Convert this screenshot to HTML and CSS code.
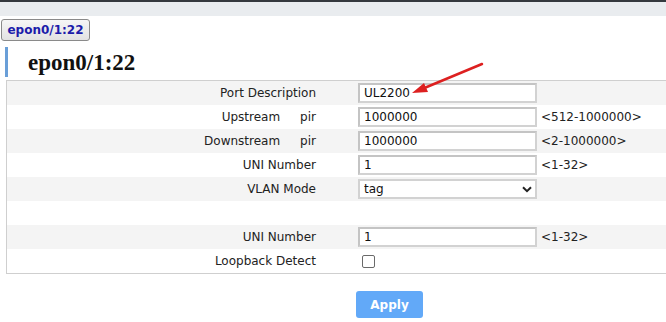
FILE: index.html
```html
<!DOCTYPE html>
<html lang="en">
<head>
  <meta charset="UTF-8" />
  <title>epon0/1:22</title>
  <link rel="stylesheet" href="styles.css">
</head>
<body>
  <div class="topbar"></div>

  <div class="tabs">
    <button class="tab">epon0/1:22</button>
  </div>

  <h2 class="title">epon0/1:22</h2>

  <div class="form">
    <div class="row">
      <div class="label">Port Description</div>
      <div class="field"><input class="text" value="UL2200" /></div>
    </div>
    <div class="row">
      <div class="label">Upstream<span class="sub">pir</span></div>
      <div class="field"><input class="text" value="1000000" /><span class="hint">&lt;512-1000000&gt;</span></div>
    </div>
    <div class="row">
      <div class="label">Downstream<span class="sub">pir</span></div>
      <div class="field"><input class="text" value="1000000" /><span class="hint">&lt;2-1000000&gt;</span></div>
    </div>
    <div class="row">
      <div class="label">UNI Number</div>
      <div class="field"><input class="text" value="1" /><span class="hint">&lt;1-32&gt;</span></div>
    </div>
    <div class="row">
      <div class="label">VLAN Mode</div>
      <div class="field">
        <div class="select-wrap">
          <select class="select">
            <option>tag</option>
            <option>transparent</option>
          </select>
          <svg class="chevron" width="10" height="7" viewBox="0 0 10 7">
            <path d="M1 1.2 L5 5.2 L9 1.2" fill="none" stroke="#222" stroke-width="2" />
          </svg>
        </div>
      </div>
    </div>
    <div class="row"></div>
    <div class="row">
      <div class="label">UNI Number</div>
      <div class="field"><input class="text" value="1" /><span class="hint">&lt;1-32&gt;</span></div>
    </div>
    <div class="row">
      <div class="label">Loopback Detect</div>
      <div class="field"><input type="checkbox" class="check" /></div>
    </div>
  </div>

  <div class="buttons">
    <button class="apply">Apply</button>
  </div>

  <svg class="arrow" width="80" height="40" viewBox="0 0 80 40">
    <line x1="76" y1="3" x2="16" y2="28" stroke="#dd2020" stroke-width="2.5" stroke-linecap="round" />
    <polygon points="6,32 18,22 22,31" fill="#dd2020" />
  </svg>
</body>
</html>
```

FILE: styles.css
```css
body {
  margin: 0;
  background: white;
  font-family: "DejaVu Sans", Verdana, sans-serif;
  font-size: 12px;
  color: #222;
  position: relative;
  overflow: hidden;
}

.topbar {
  height: 14px;
  border-top: 2px solid #34393e;
  background: #e9ecef;
}

.tabs {
  padding: 3px 0 0 1px;
}

.tab {
  height: 22px;
  width: 89px;
  padding: 0;
  border: 1px solid #8a8a8a;
  border-radius: 3px;
  background: linear-gradient(#f6f6f6, #e2e2e2);
  font-family: "DejaVu Sans", Verdana, sans-serif;
  font-size: 12px;
  font-weight: bold;
  color: #1c1caa;
}

.title {
  margin: 6px 0 0 5px;
  height: 30px;
  border-left: 3px solid #6a9fd8;
  padding-left: 20px;
  font-family: "Liberation Serif", "Times New Roman", serif;
  font-size: 23px;
  font-weight: bold;
  line-height: 31px;
  color: #111;
}

.form {
  margin: 3px 0 0 6px;
  width: 680px;
  border: 1px solid #cfcfcf;
}

.row {
  display: flex;
  align-items: center;
  height: 24px;
}

.row:nth-child(odd) {
  background: #f4f4f4;
}

.label {
  width: 309px;
  text-align: right;
}

.sub {
  margin-left: 20px;
}

.field {
  margin-left: 42px;
  display: flex;
  align-items: center;
}

.text {
  width: 179px;
  height: 20px;
  box-sizing: border-box;
  margin: 0;
  padding: 0 4px;
  border: 2px solid #d2d2d2;
  border-top-color: #c4c4c4;
  border-left-color: #c4c4c4;
  background: white;
  font-family: "DejaVu Sans", Verdana, sans-serif;
  font-size: 12px;
  color: #111;
}

.hint {
  margin-left: 4px;
}

.select-wrap {
  position: relative;
}

.select {
  appearance: none;
  width: 179px;
  height: 20px;
  box-sizing: border-box;
  margin: 0;
  padding: 0 4px;
  border: 2px solid #d2d2d2;
  border-radius: 0;
  background: white;
  font-family: "DejaVu Sans", Verdana, sans-serif;
  font-size: 12px;
  color: #111;
}

.chevron {
  position: absolute;
  right: 5px;
  top: 7px;
}

.check {
  appearance: none;
  width: 13px;
  height: 13px;
  margin: 1px 0 0 4px;
  border: 1px solid #6a6a6a;
  border-radius: 2px;
  background: white;
}

.buttons {
  padding: 17px 0 0 356px;
}

.apply {
  width: 67px;
  height: 27px;
  border: none;
  border-radius: 3px;
  background: #62a9f8;
  color: white;
  font-family: "DejaVu Sans", Verdana, sans-serif;
  font-size: 12px;
  font-weight: bold;
}

.arrow {
  position: absolute;
  left: 406px;
  top: 61px;
}
```
